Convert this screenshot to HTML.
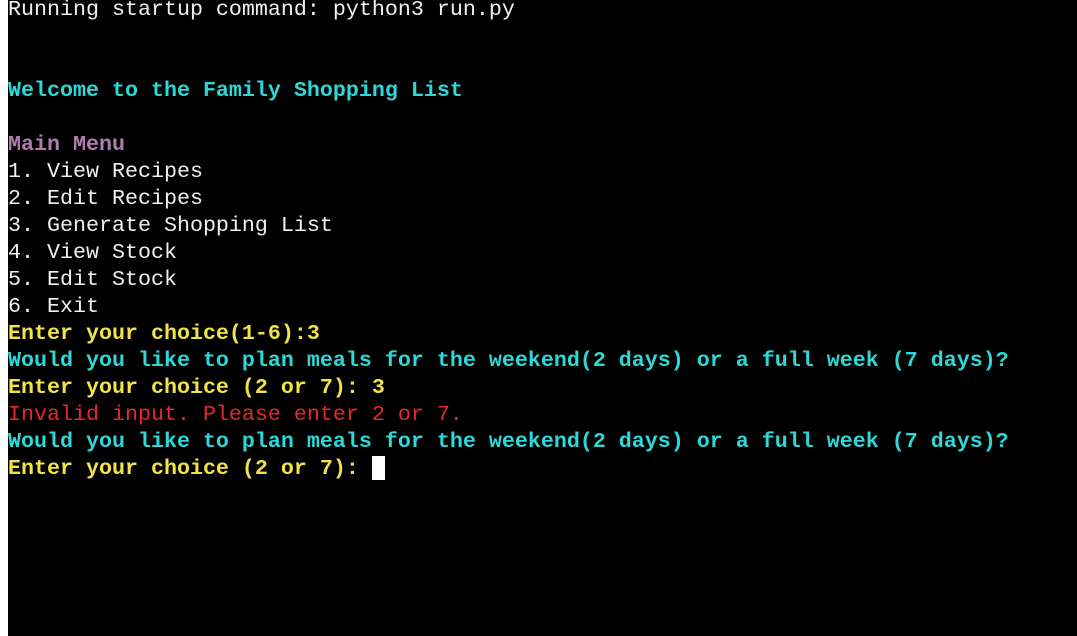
<!DOCTYPE html>
<html><head><style>
html,body{margin:0;padding:0;width:1077px;height:636px;overflow:hidden;background:#fff;}
#t{position:absolute;left:8px;top:0;width:1069px;height:636px;background:#000;}
.l{position:absolute;left:0;white-space:pre;font-family:"Liberation Mono","Courier New",monospace;font-size:21.67px;line-height:27px;height:27px;color:#f0f0f0;}
.b{font-weight:bold}
.c{color:#2cd8d8}.y{color:#f2e445}.r{color:#e82828}.p{color:#b07cb0}
#cur{position:absolute;left:364px;top:456px;width:13px;height:24px;background:#fff;}
</style></head><body><div id="t">
<div class="l" style="top:-4px">Running startup command: python3 run.py</div>
<div class="l b c" style="top:77px">Welcome to the Family Shopping List</div>
<div class="l b p" style="top:131px">Main Menu</div>
<div class="l" style="top:158px">1. View Recipes</div>
<div class="l" style="top:185px">2. Edit Recipes</div>
<div class="l" style="top:212px">3. Generate Shopping List</div>
<div class="l" style="top:239px">4. View Stock</div>
<div class="l" style="top:266px">5. Edit Stock</div>
<div class="l" style="top:293px">6. Exit</div>
<div class="l b y" style="top:320px">Enter your choice(1-6):3</div>
<div class="l b c" style="top:347px">Would you like to plan meals for the weekend(2 days) or a full week (7 days)?</div>
<div class="l b y" style="top:374px">Enter your choice (2 or 7): 3</div>
<div class="l r" style="top:401px">Invalid input. Please enter 2 or 7.</div>
<div class="l b c" style="top:428px">Would you like to plan meals for the weekend(2 days) or a full week (7 days)?</div>
<div class="l b y" style="top:455px">Enter your choice (2 or 7): </div>
<div id="cur"></div>
</div></body></html>
